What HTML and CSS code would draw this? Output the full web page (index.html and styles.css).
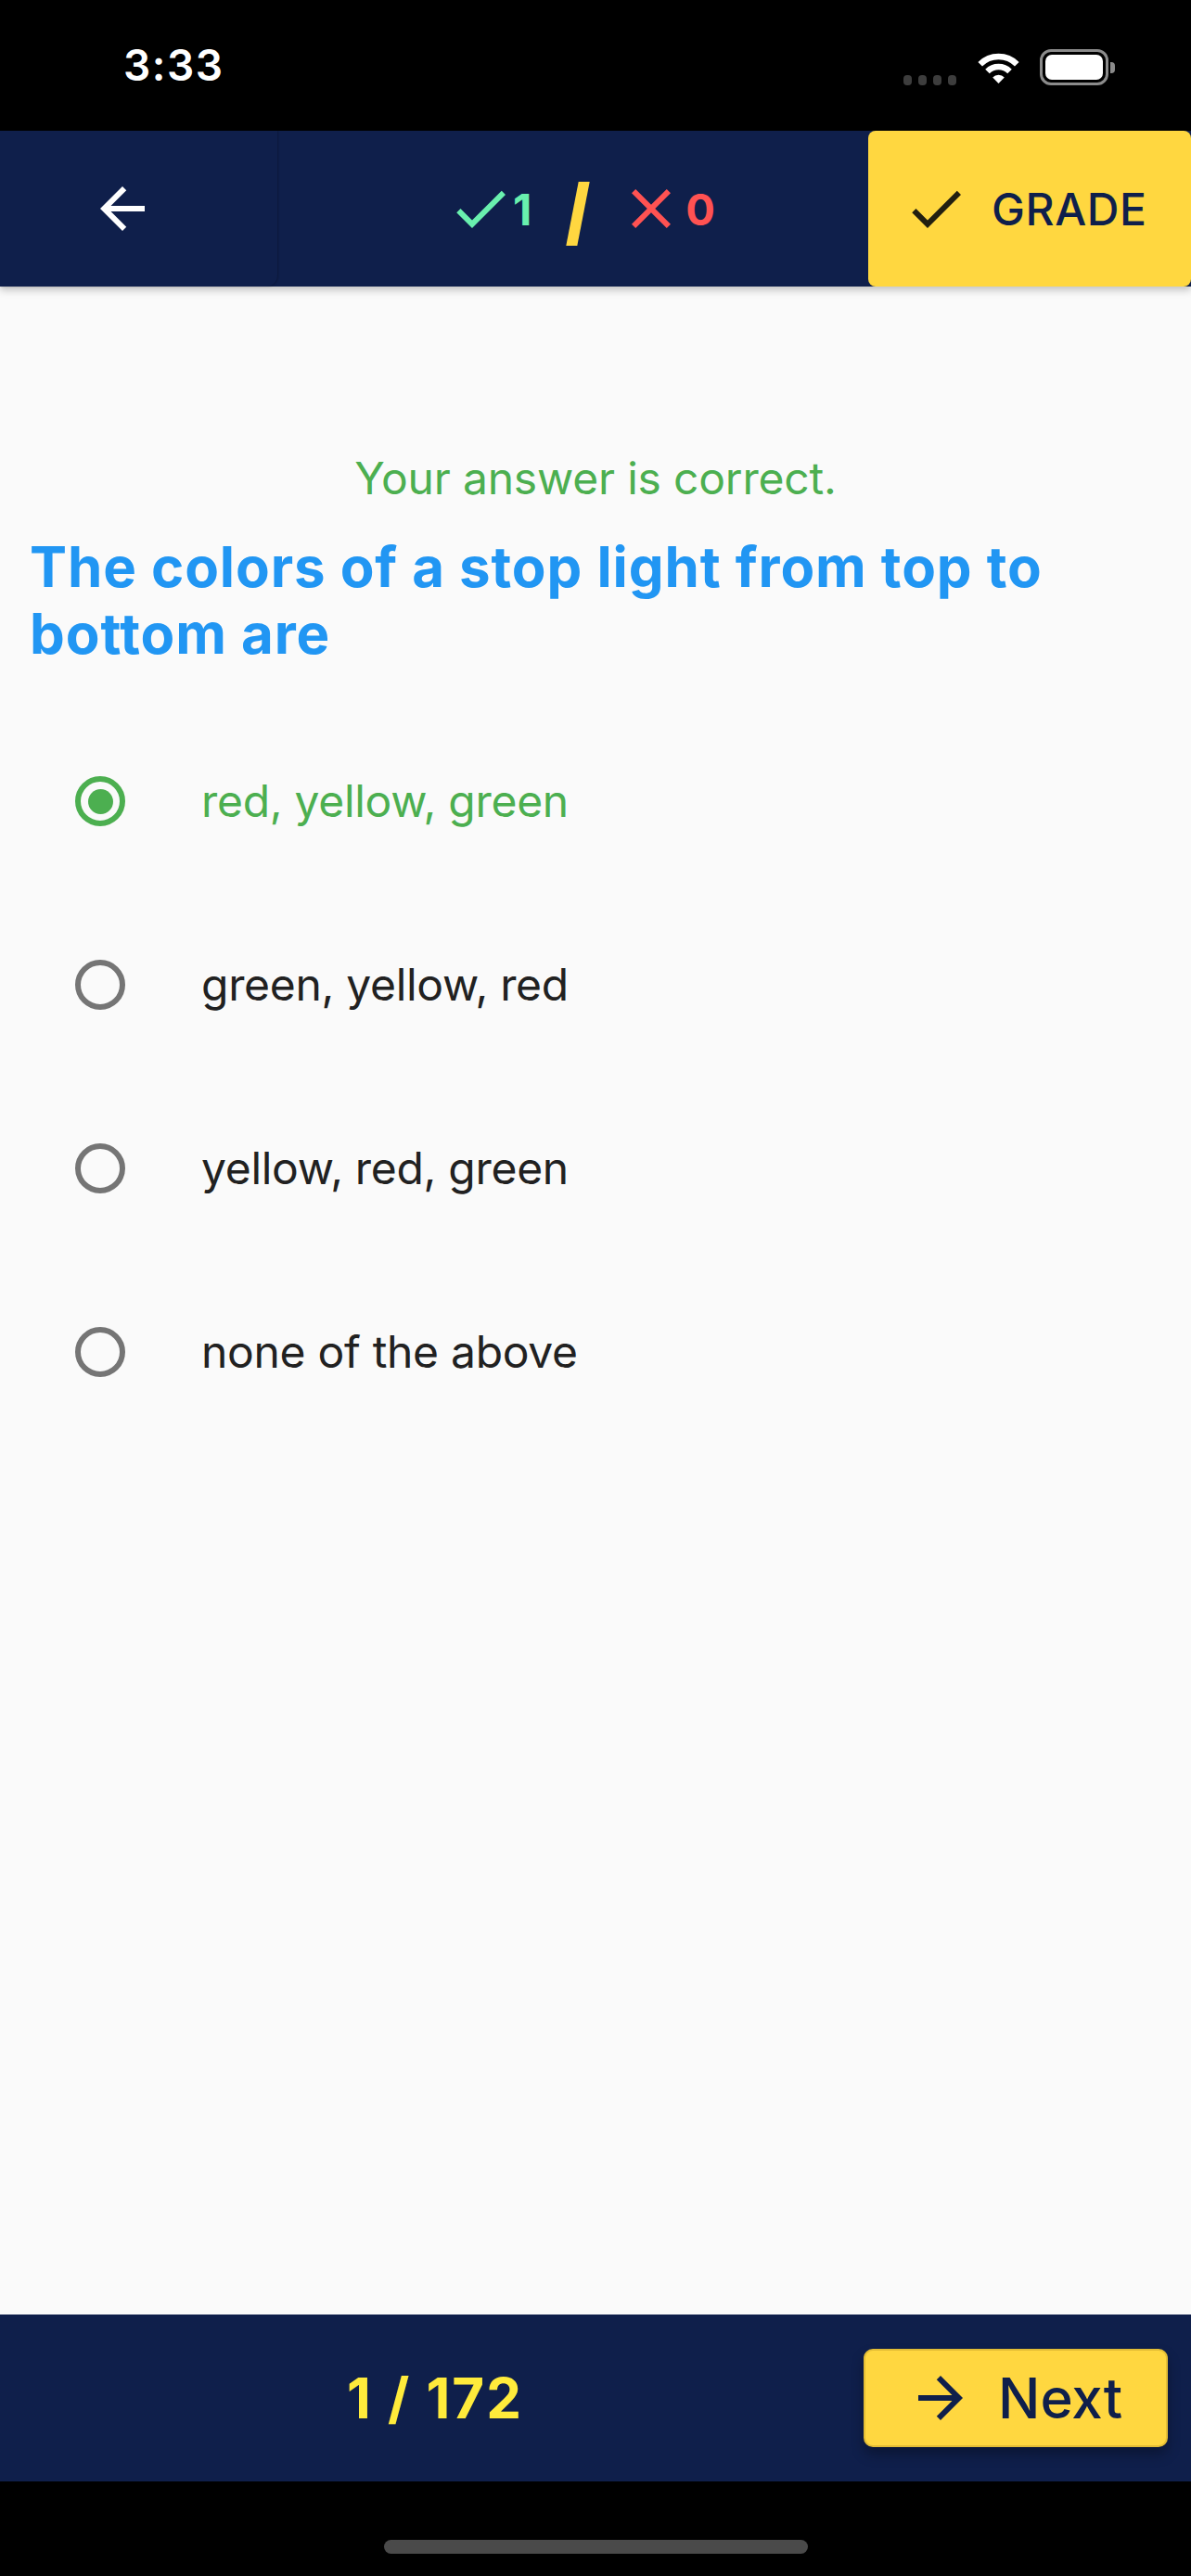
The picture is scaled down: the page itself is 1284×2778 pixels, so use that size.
FILE: index.html
```html
<!DOCTYPE html>
<html lang="en">
<head>
<meta charset="utf-8">
<title>Quiz</title>
<link rel="stylesheet" href="styles.css">
</head>
<body>
<div class="screen">
  <div class="status">
    <div class="time">3:33</div>
    <div class="status-icons">
      <div class="dots"><span></span><span></span><span></span><span></span></div>
      <svg class="wifi" width="51" height="36" viewBox="0 0 51 36">
        <path d="M5.7 14.2 A28 28 0 0 1 45.3 14.2" fill="none" stroke="#fff" stroke-width="6.5"/>
        <path d="M13.5 22 A17 17 0 0 1 37.5 22" fill="none" stroke="#fff" stroke-width="6.5"/>
        <path d="M25.5 35 L19.2 28.6 A8.5 8.5 0 0 1 31.8 28.6 Z" fill="#fff"/>
      </svg>
      <div class="battery"><div class="battery-fill"></div></div>
      <div class="battery-nub"></div>
    </div>
  </div>

  <div class="appbar">
    <div class="back">
      <svg width="72" height="72" viewBox="0 0 24 24"><path d="M20 11H7.830l5.59-5.59L12 4l-8 8 8 8 1.41-1.41L7.83 13H20v-2z" fill="#fff"/></svg>
    </div>
    <div class="score">
      <svg class="icon" width="72" height="72" viewBox="0 0 24 24"><path d="M9 16.17L4.83 12l-1.42 1.41L9 19 21 7l-1.41-1.41z" fill="#69F0AE"/></svg>
      <span class="num ok">1</span>
      <span class="slash"></span>
      <svg class="icon" width="72" height="72" viewBox="0 0 24 24"><path d="M19 6.41L17.59 5 12 10.59 6.41 5 5 6.41 10.59 12 5 17.59 6.41 19 12 13.41 17.59 19 19 17.59 13.41 12z" fill="#FF5252"/></svg>
      <span class="num bad">0</span>
    </div>
    <div class="grade">
      <svg width="72" height="72" viewBox="0 0 24 24"><path d="M9 16.17L4.83 12l-1.42 1.41L9 19 21 7l-1.41-1.41z" fill="#221f10"/></svg>
      <span class="grade-label">GRADE</span>
    </div>
  </div>

  <div class="content">
    <p class="feedback">Your answer is correct.</p>
    <h1 class="question">The colors of a stop light from top to bottom are</h1>
    <div class="options">
      <div class="option selected">
        <span class="radio"><span class="dot"></span></span>
        <span class="option-text">red, yellow, green</span>
      </div>
      <div class="option">
        <span class="radio"></span>
        <span class="option-text">green, yellow, red</span>
      </div>
      <div class="option">
        <span class="radio"></span>
        <span class="option-text">yellow, red, green</span>
      </div>
      <div class="option">
        <span class="radio"></span>
        <span class="option-text">none of the above</span>
      </div>
    </div>
  </div>

  <div class="bottombar">
    <div class="progress">1 / 172</div>
    <div class="next">
      <svg width="72" height="72" viewBox="0 0 24 24"><path d="M12 4l-1.41 1.41L16.17 11H4v2h12.17l-5.58 5.59L12 20l8-8z" fill="#0f1f4b"/></svg>
      <span class="next-label">Next</span>
    </div>
  </div>

  <div class="homebar"><div class="indicator"></div></div>
</div>
</body>
</html>
```

FILE: styles.css
```css
* { box-sizing: border-box; }
html, body { margin: 0; padding: 0; }
body {
  font-family: Inter, "Noto Sans", "Liberation Sans", sans-serif;
  background: #000;
}
.screen {
  width: 1284px;
  height: 2778px;
  display: flex;
  flex-direction: column;
  background: #fafafa;
}

/* status bar */
.status {
  height: 141px;
  background: #000;
  display: flex;
  align-items: flex-start;
  justify-content: space-between;
}
.time {
  color: #fff;
  font-size: 46px;
  font-weight: 600;
  letter-spacing: 1.5px;
  line-height: 46px;
  margin-top: 47px;
  margin-left: 133px;
}
.status-icons {
  display: flex;
  align-items: flex-end;
  margin-top: 53px;
  margin-right: 82px;
  height: 39px;
}
.dots { display: flex; gap: 7px; margin-right: 20px; }
.dots span {
  width: 9px; height: 11px; border-radius: 4px; background: #3d3d3d;
}
.wifi { margin-right: 19px; margin-bottom: 1px; }
.battery {
  width: 74px; height: 39px;
  border: 3px solid #8b8b8b;
  border-radius: 12px;
  padding: 3px;
}
.battery-fill { width: 100%; height: 100%; background: #fff; border-radius: 7px; }
.battery-nub {
  width: 5px; height: 12px; background: #8b8b8b;
  border-radius: 0 4px 4px 0;
  margin-left: 2px;
  margin-bottom: 13px;
}

/* app bar */
.appbar {
  height: 168px;
  background: #0f1f4b;
  display: flex;
  position: relative;
  z-index: 2;
  box-shadow: 0 4px 8px rgba(0,0,0,0.22);
}
.back {
  width: 299px;
  display: flex;
  align-items: center;
  padding-left: 96px;
  border-radius: 0 0 12px 0;
  box-shadow: 1px 0 2px rgba(0,0,0,0.25);
}
.score {
  flex: 1;
  display: flex;
  align-items: center;
  padding-left: 183px;
}
.num {
  font-size: 47px;
  font-weight: 700;
  line-height: 1;
}
.num.ok { color: #69f0ae; margin-left: -1px; }
.num.bad { color: #ff5252; margin-left: 1px; }
.slash {
  display: inline-block;
  width: 12px;
  height: 69px;
  background: #ffd740;
  transform: skewX(-11deg);
  margin-left: 44px;
  margin-right: 37px;
  margin-top: 10px;
}
.grade {
  width: 348px;
  background: #ffd740;
  border-radius: 8px;
  display: flex;
  align-items: center;
  padding-left: 37px;
}
.grade-label {
  color: #0f1f4b;
  font-size: 48px;
  font-weight: 500;
  letter-spacing: 0.6px;
  margin-left: 24px;
}

/* content */
.content {
  flex: 1;
  padding: 178px 32px 0 32px;
}
.feedback {
  margin: 0;
  text-align: center;
  color: #4caf50;
  font-size: 48px;
  letter-spacing: -0.2px;
  line-height: 58px;
}
.question {
  margin: 30px 0 0 0;
  color: #2196f3;
  font-size: 60px;
  font-weight: 700;
  letter-spacing: 0.9px;
  line-height: 72px;
}
.options { margin-top: 46px; }
.option {
  height: 198px;
  display: flex;
  align-items: center;
  padding-left: 49px;
}
.radio {
  width: 54px;
  height: 54px;
  border-radius: 50%;
  border: 6px solid #757575;
  display: flex;
  align-items: center;
  justify-content: center;
  flex: none;
}
.dot {
  width: 27px; height: 27px; border-radius: 50%; background: #4caf50;
}
.option.selected .radio { border-color: #4caf50; }
.option-text {
  margin-left: 82px;
  font-size: 48px;
  color: #212121;
  letter-spacing: -0.3px;
  line-height: 60px;
}
.option.selected .option-text { color: #4caf50; }

/* bottom bar */
.bottombar {
  height: 180px;
  background: #0f1f4b;
  display: flex;
  align-items: center;
}
.progress {
  flex: 1;
  padding-left: 7px;
  text-align: center;
  color: #ffeb3b;
  font-size: 60px;
  font-weight: 700;
  letter-spacing: 2px;
}
.next {
  width: 328px;
  height: 106px;
  margin-right: 25px;
  background: #ffd740;
  border: 2px solid #e3bd35;
  border-radius: 10px;
  box-shadow: 0 8px 14px rgba(0,0,0,0.3);
  display: flex;
  align-items: center;
  padding-left: 45px;
}
.next-label {
  color: #0f1f4b;
  font-size: 60px;
  font-weight: 500;
  margin-left: 26px;
}

.homebar {
  height: 102px;
  background: #000;
  display: flex;
  justify-content: center;
  padding-top: 63px;
}
.indicator {
  width: 457px; height: 15px; border-radius: 8px; background: #4a4a4a;
  margin-left: 1px;
}
```
